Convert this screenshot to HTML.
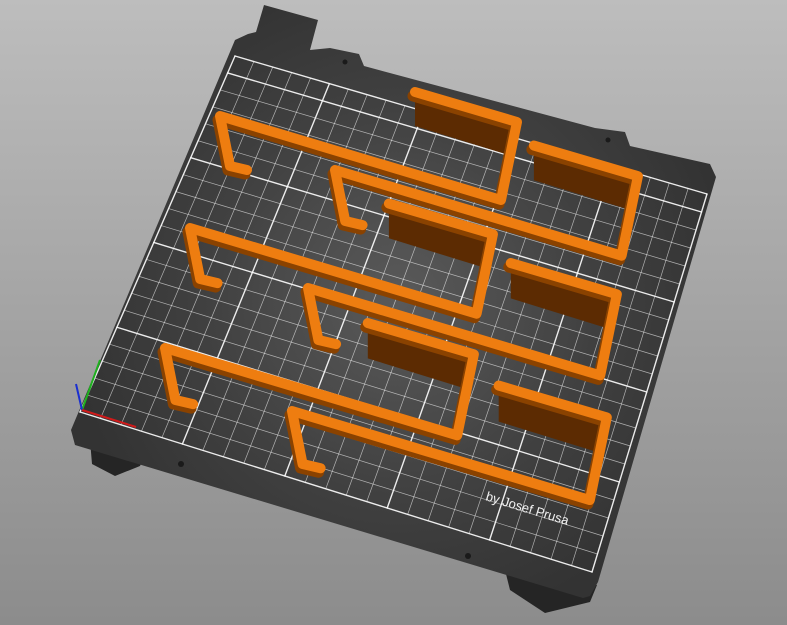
<!DOCTYPE html>
<html><head><meta charset="utf-8"><style>
html,body{margin:0;padding:0;width:787px;height:625px;overflow:hidden}
body{background:linear-gradient(#bdbdbd,#a4a4a4 50%,#8c8c8c)}
svg{position:absolute;left:0;top:0}
</style></head><body>
<svg id="s" width="787" height="625" viewBox="0 0 787 625" xmlns="http://www.w3.org/2000/svg">
<defs>
<radialGradient id="pg" cx="400" cy="300" r="330" gradientUnits="userSpaceOnUse">
<stop offset="0" stop-color="#5a5a5a"/><stop offset="0.6" stop-color="#404040"/><stop offset="1" stop-color="#333"/>
</radialGradient>
</defs>
<polygon points="90,440 145,455 140,466 115,476 92,464" fill="#252525"/>
<polygon points="505,570 597,585 590,602 545,613 510,590" fill="#252525"/>
<polygon fill="url(#pg)" points="264,5 318,20 310,50 330,48 359,54 364,66 595,128 625,132 630,146 710,164 716,177 598,582 590,596 583,598 75,445 71,430 235,40 248,34 256,32"/>
<g id="grid" stroke-linecap="round"></g>
<circle cx="345" cy="62" r="2.5" fill="#1a1a1a"/>
<circle cx="608" cy="140" r="2.5" fill="#1a1a1a"/>
<circle cx="181" cy="464" r="3" fill="#1a1a1a"/>
<circle cx="468" cy="556" r="3" fill="#1a1a1a"/>
<g id="parts"></g>
<text x="0" y="0" transform="translate(485,500) rotate(17)" fill="#f2f2f2" font-family="Liberation Sans, sans-serif" font-size="13">by Josef Prusa</text>
<line x1="82" y1="410" x2="100" y2="360" stroke="#1fb01f" stroke-width="2"/>
<line x1="82" y1="410" x2="76" y2="384" stroke="#1a2fd0" stroke-width="2"/>
<line x1="82" y1="410" x2="136" y2="427" stroke="#d01a1a" stroke-width="2"/>
</svg>
<script>
var NS="http://www.w3.org/2000/svg";
function el(p,t,a){var e=document.createElementNS(NS,t);for(var k in a)e.setAttribute(k,a[k]);p.appendChild(e);return e;}
var P00=[235,56],P10=[707,194],P11=[592,572],P01=[80,412];
function bl(u,v){return [P00[0]*(1-u)*(1-v)+P10[0]*u*(1-v)+P11[0]*u*v+P01[0]*(1-u)*v,
P00[1]*(1-u)*(1-v)+P10[1]*u*(1-v)+P11[1]*u*v+P01[1]*(1-u)*v];}
var g=document.getElementById('grid');var NU=25,NV=21;
for(var i=0;i<=NU;i++){var t=i/NU;var maj=(i%5==0);
var w=maj?1.4:0.7,o=maj?0.9:0.6;
var a=bl(t,0),b=bl(t,1);el(g,'line',{x1:a[0],y1:a[1],x2:b[0],y2:b[1],stroke:'#fff','stroke-width':w,'stroke-opacity':o});}
for(var i=0;i<=NV;i++){var t=i/NV;var maj=((NV-i)%5==0)||i==0;
var w=maj?1.4:0.7,o=maj?0.9:0.6;
var a=bl(0,t),b=bl(1,t);el(g,'line',{x1:a[0],y1:a[1],x2:b[0],y2:b[1],stroke:'#fff','stroke-width':w,'stroke-opacity':o});}
var pr=document.getElementById('parts');
function part(x,y,s){
function p(dx,dy){return (x+dx*s)+','+(y+dy*s);}
el(pr,'polygon',{points:[p(195,-24),p(297,6),p(292,40),p(195,10)].join(' '),fill:'#5c2b02'});
var d='M'+p(195,-24)+' L'+p(297,6)+' L'+p(281,84)+' L'+p(0,0)+' L'+p(10,50)+' L'+p(27,54);
el(pr,'path',{d:d,fill:'none',stroke:'#8a4200','stroke-width':11,'stroke-linejoin':'round','stroke-linecap':'round',transform:'translate(-2,4)'});
el(pr,'path',{d:d,fill:'none',stroke:'#ee7d10','stroke-width':10,'stroke-linejoin':'round','stroke-linecap':'round'});
}
part(220,116,1);part(335,170,1.02);part(190,228,1.02);part(308,288,1.04);part(165,348,1.04);part(292,411,1.06);
</script>
</body></html>
